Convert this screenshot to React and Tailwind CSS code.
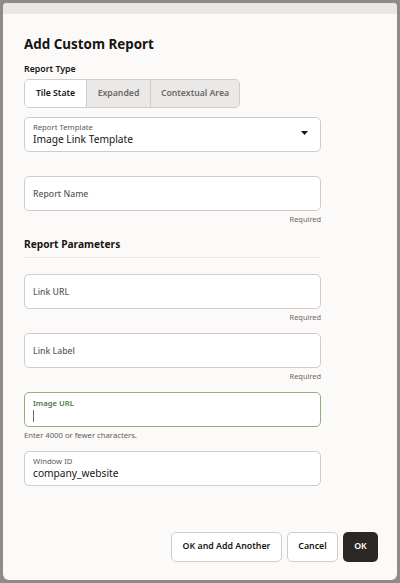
import React from 'react';

const font = { fontFamily: '"Noto Sans", "Open Sans", Arial, sans-serif' };

const Field = ({ label, value, placeholder, active, help, required, className = '' }) => (
  <div className={className}>
    <div
      className={`h-[35px] rounded-[5px] bg-white border px-[8px] flex flex-col justify-center ${
        active ? 'border-[#8fae84]' : 'border-[#cfcccb]'
      }`}
    >
      {placeholder && <div className="text-[8.7px] leading-[12px] text-[#5e5a57] font-medium">{placeholder}</div>}
      {label && (
        <div className={`text-[7.7px] leading-[10px] ${active ? 'text-[#4f7a3f] font-semibold' : 'text-[#5e5a57]'}`}>
          {label}
        </div>
      )}
      {value !== undefined && <div className="text-[10.2px] leading-[15px] text-[#161513]">{value}</div>}
      {active && <div className="w-px h-[12px] bg-[#6b6866] mt-[2px]" />}
    </div>
    {required && <div className="text-right text-[7.4px] text-[#6b6866] mt-[2px] leading-[12px]">Required</div>}
    {help && <div className="text-[7.7px] text-[#5e5a57] mt-[2px] leading-[12px]">{help}</div>}
  </div>
);

const App = () => {
  return (
    <div className="w-[400px] h-[583px] bg-[#8d8c8b] pt-[3px] pl-[3px] pr-[3px] pb-[3px]" style={font}>
      <div className="h-full bg-[#fcfaf9] rounded-tl-[4px] rounded-tr-[4px] rounded-b-[6px] flex flex-col overflow-hidden">
        <div className="h-[11px] bg-[#e9e7e5]" />
        <div className="px-[21px] flex-1 flex flex-col">
          <h1 className="mt-[19px] text-[13.4px] leading-[22px] font-bold text-[#161513]">Add Custom Report</h1>

          <div className="mt-[7px] text-[8.8px] leading-[14px] font-semibold text-[#161513]">Report Type</div>
          <div className="mt-[3px] flex w-[216px] h-[29px] rounded-[5px] border border-[#cfcccb] overflow-hidden text-[8.7px] font-semibold">
            <div className="w-[61px] bg-white flex items-center justify-center text-[#161513]">Tile State</div>
            <div className="w-[64px] bg-[#ebe9e7] border-l border-[#cfcccb] flex items-center justify-center text-[#6b6866]">
              Expanded
            </div>
            <div className="flex-1 bg-[#ebe9e7] border-l border-[#cfcccb] flex items-center justify-center text-[#6b6866]">
              Contextual Area
            </div>
          </div>

          <div className="mt-[9px] w-[297px] h-[35px] rounded-[5px] bg-white border border-[#cfcccb] px-[8px] flex items-center">
            <div className="flex-1">
              <div className="text-[7.7px] leading-[10px] text-[#5e5a57]">Report Template</div>
              <div className="text-[10.2px] leading-[15px] text-[#161513]">Image Link Template</div>
            </div>
            <svg width="7" height="4" viewBox="0 0 7 4" className="mr-[4px] mb-[3px]">
              <path d="M0 0 L7 0 L3.5 4 Z" fill="#161513" />
            </svg>
          </div>

          <Field className="mt-[24px] w-[297px]" placeholder="Report Name" required />

          <div className="mt-[10px] text-[10.2px] leading-[18px] font-bold text-[#161513]">Report Parameters</div>
          <div className="mt-[4px] w-[297px] border-t border-[#ebe8e6]" />

          <Field className="mt-[16px] w-[297px]" placeholder="Link URL" required />
          <Field className="mt-[10px] w-[297px]" placeholder="Link Label" required />
          <Field className="mt-[10px] w-[297px]" label="Image URL" active help="Enter 4000 or fewer characters." />
          <Field className="mt-[10px] w-[297px]" label="Window ID" value="company_website" />

          <div className="mt-auto mb-[18px] -mr-[2px] flex justify-end gap-[5px] text-[8.8px] font-semibold">
            <button className="h-[30px] w-[111px] rounded-[5px] border border-[#cfcccb] bg-white text-[#161513]">
              OK and Add Another
            </button>
            <button className="h-[30px] w-[51px] rounded-[5px] border border-[#cfcccb] bg-white text-[#161513]">
              Cancel
            </button>
            <button className="h-[30px] w-[35px] rounded-[5px] bg-[#2b2725] text-white">OK</button>
          </div>
        </div>
      </div>
    </div>
  );
};

export default App;
